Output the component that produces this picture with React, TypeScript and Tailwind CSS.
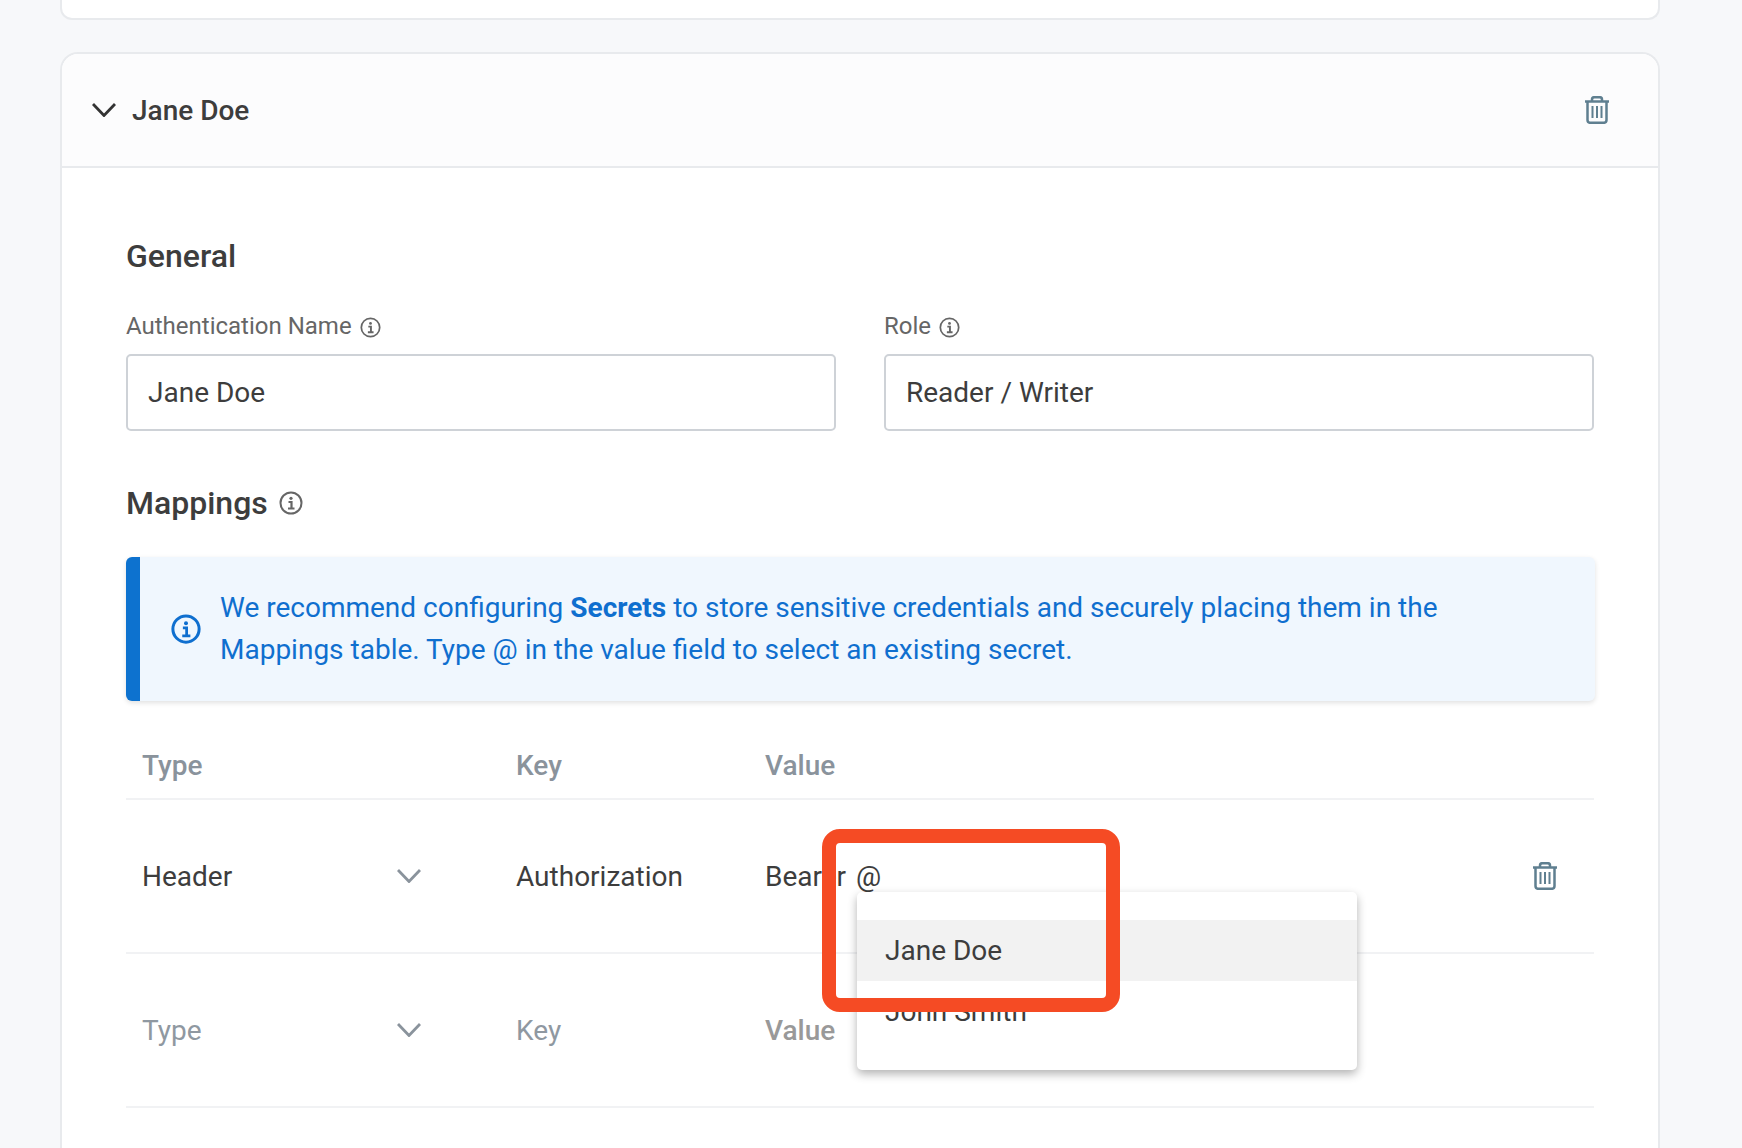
const TrashIcon = ({ className }: { className: string }) => (
  <svg viewBox="0 0 24 28" fill="none" stroke="#5f7f90" strokeWidth="2.500" className={className}>
    <path d="M0 5.5h24" />
    <path d="M7 5V3.5C7 2 8 1.200 9.5 1.200h5C16 1.200 17 2 17 3.5V5" />
    <path d="M2.500 5.5V24c0 1.600 1.200 2.800 2.800 2.800h13.400c1.600 0 2.800-1.200 2.800-2.800V5.500" />
    <path d="M7.500 10v12M12 10v12M16.500 10v12" strokeWidth="2" />
  </svg>
);

const InfoIcon = ({ className, color, weight }: { className: string; color: string; weight: string }) => (
  <svg viewBox="0 0 24 24" fill="none" stroke={color} strokeWidth={weight} className={className}>
    <circle cx="12" cy="12" r="10.500" />
    <path d="M9.500 11h3v6.500M9 17.500h6.500" strokeWidth="2.200" />
    <circle cx="12" cy="7.300" r="1.600" fill={color} stroke="none" />
  </svg>
);

const Chevron = ({ className, color, weight }: { className: string; color: string; weight: string }) => (
  <svg viewBox="0 0 24 14" fill="none" stroke={color} strokeWidth={weight} className={className}>
    <path d="M1 1l11 11.500L23 1" />
  </svg>
);

const Field = ({ label, value }: { label: string; value: string }) => (
  <div>
    <div className="flex items-center gap-[8px] text-[24px] leading-[24px] text-[#666666]">
      {label}
      <InfoIcon className="h-[21px] w-[21px] mt-[2px]" color="#666666" weight="2" />
    </div>
    <div className="mt-[16px] flex h-[77px] items-center rounded-[5px] border-2 border-[#ced2d7] bg-white px-[20px] text-[28px] text-[#3d3d3d]">
      {value}
    </div>
  </div>
);

export default function App() {
  return (
    <div className="h-[1148px] overflow-hidden bg-[#f7f8fa] font-[Roboto,sans-serif] pl-[60px] pr-[82px] text-[#3d3d3d]">
      <div className="h-[20px] rounded-b-[12px] border-x-2 border-b-2 border-[#e8eaed] bg-white" />

      <div className="mt-[32px] h-[1200px] rounded-t-[18px] border-x-2 border-t-2 border-[#e8eaed] bg-white">
        <div className="flex h-[114px] items-center justify-between rounded-t-[16px] border-b-2 border-[#e8eaed] bg-[#fcfcfd] pl-[30px] pr-[49px]">
          <div className="flex items-center gap-4">
            <Chevron className="h-[14px] w-[24px]" color="#333333" weight="2.800" />
            <span className="pt-[2px] text-[28px] font-medium">Jane Doe</span>
          </div>
          <TrashIcon className="h-[28px] w-[24px]" />
        </div>

        <div className="pl-[64px] pr-[64px] pt-[70px]">
          <h2 className="text-[32px] font-medium leading-[36px]">General</h2>
          <div className="mt-[40px] grid grid-cols-2 gap-x-[48px]">
            <Field label="Authentication Name" value="Jane Doe" />
            <Field label="Role" value="Reader / Writer" />
          </div>

          <div className="mt-[54px] flex items-center gap-[11px]">
            <h2 className="text-[32px] font-medium leading-[36px]">Mappings</h2>
            <InfoIcon className="h-[24px] w-[24px]" color="#666666" weight="2" />
          </div>

          <div className="mt-[36px] -mr-[1px] flex h-[144px] items-center rounded-[6px] border-l-[14px] border-[#0d72cf] bg-[#f0f7fe] pl-[31px] text-[28px] leading-[42px] text-[#0f6fcf] shadow-[0_2px_5px_rgba(0,0,0,0.12)]">
            <InfoIcon className="h-[30px] w-[30px] shrink-0" color="#0f6fcf" weight="2.400" />
            <p className="ml-[19px] w-[1300px]">
              We recommend configuring <span className="font-bold">Secrets</span> to store sensitive credentials and securely placing them in the Mappings table. Type @ in the value field to select an existing secret.
            </p>
          </div>

          <div className="mt-[40px] grid h-[59px] grid-cols-[374px_249px_1fr] border-b-2 border-[#f1f2f4] pl-[16px] pt-[10px] text-[28px] font-medium leading-[30px] text-[#8a939c]">
            <span>Type</span>
            <span>Key</span>
            <span>Value</span>
          </div>

          <div className="relative grid h-[154px] grid-cols-[374px_249px_1fr] items-center border-b-2 border-[#f1f2f4] pl-[16px] text-[28px]">
            <div className="flex items-center justify-between pr-[95px]">
              <span className="pt-[2px]">Header</span>
              <Chevron className="h-[14px] w-[24px]" color="#8a939c" weight="2.800" />
            </div>
            <span className="pt-[2px]">Authorization</span>
            <div className="flex items-center justify-between pr-[37px]">
              <span className="pt-[2px]">
                Bearer <span className="ml-[3px]">@</span>
              </span>
              <TrashIcon className="h-[28px] w-[24px]" />
            </div>

            <div className="absolute left-[731px] top-[92px] z-10 w-[500px] rounded-[5px] bg-white py-[28px] shadow-[0_4px_10px_rgba(0,0,0,0.3)]">
              <div className="flex h-[61px] items-center bg-[#f2f2f2] px-[28px]">Jane Doe</div>
              <div className="flex h-[61px] items-center px-[28px]">John Smith</div>
            </div>
            <div className="absolute left-[696px] top-[29px] z-20 h-[183px] w-[298px] rounded-[18px] border-[14px] border-[#f54b24]" />
          </div>

          <div className="grid h-[154px] grid-cols-[374px_249px_1fr] items-center border-b-2 border-[#f1f2f4] pl-[16px] text-[28px]">
            <div className="flex items-center justify-between pr-[95px] text-[#8f98a1]">
              <span className="pt-[2px]">Type</span>
              <Chevron className="h-[14px] w-[24px]" color="#8a939c" weight="2.800" />
            </div>
            <span className="pt-[2px] text-[#8f98a1]">Key</span>
            <span className="pt-[2px] font-medium text-[#999999]">Value</span>
          </div>
        </div>
      </div>
    </div>
  );
}
